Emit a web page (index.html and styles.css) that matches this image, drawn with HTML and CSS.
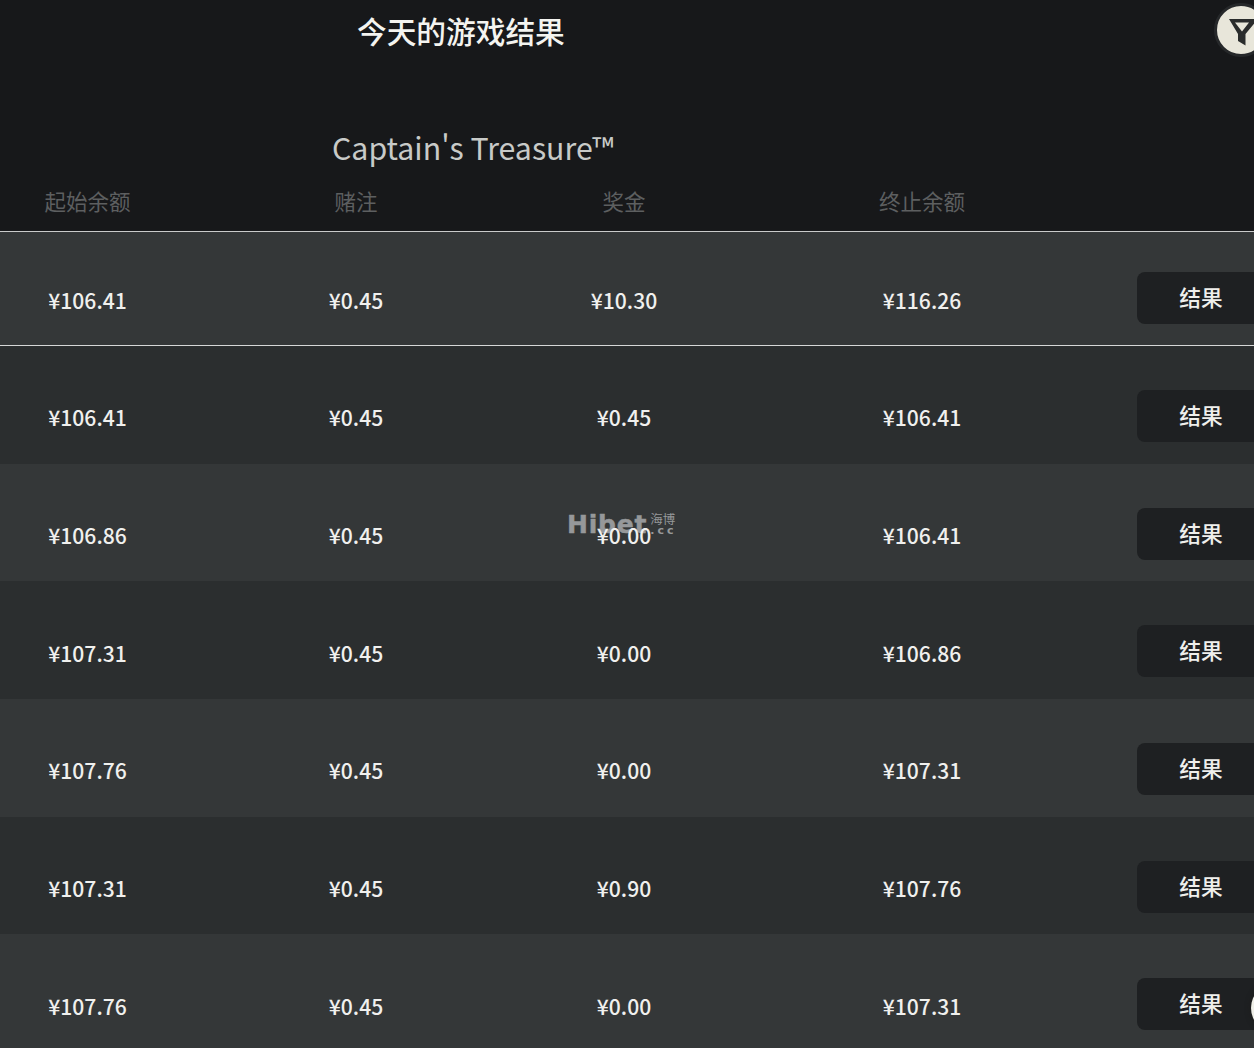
FILE: index.html
```html
<!DOCTYPE html>
<html lang="zh-CN">
<head>
<meta charset="utf-8">
<title>今天的游戏结果</title>
<link rel="stylesheet" href="styles.css">
</head>
<body>
<div class="page">
  <header class="head">
    <h1 class="title">今天的游戏结果</h1>
    <button class="filter" aria-label="filter">
      <svg viewBox="0 0 32 32" width="32" height="32"><path d="M2 3H31L18.5 18V29.5L11 25V18Z M8 6.5L15 15.5L22 6.5Z" fill="#2a2c2c" fill-rule="evenodd"/></svg>
    </button>
  </header>
  <h2 class="game">Captain's Treasure™</h2>
  <div class="row labels">
    <span>起始余额</span><span>赌注</span><span>奖金</span><span>终止余额</span><span></span>
  </div>
  <div class="row data first"><span>¥106.41</span><span>¥0.45</span><span>¥10.30</span><span>¥116.26</span><a class="btn">结果</a></div>
  <div class="row data even"><span>¥106.41</span><span>¥0.45</span><span>¥0.45</span><span>¥106.41</span><a class="btn">结果</a></div>
  <div class="row data"><span>¥106.86</span><span>¥0.45</span><span>¥0.00</span><span>¥106.41</span><a class="btn">结果</a></div>
  <div class="row data even"><span>¥107.31</span><span>¥0.45</span><span>¥0.00</span><span>¥106.86</span><a class="btn">结果</a></div>
  <div class="row data"><span>¥107.76</span><span>¥0.45</span><span>¥0.00</span><span>¥107.31</span><a class="btn">结果</a></div>
  <div class="row data even"><span>¥107.31</span><span>¥0.45</span><span>¥0.90</span><span>¥107.76</span><a class="btn">结果</a></div>
  <div class="row data"><span>¥107.76</span><span>¥0.45</span><span>¥0.00</span><span>¥107.31</span><a class="btn">结果</a></div>
  <div class="mark"><span class="mark-name">Hibet</span><span class="mark-side"><span class="mark-cn">海博</span><span class="mark-cc">.cc</span></span></div>
  <div class="float"></div>
</div>
</body>
</html>
```

FILE: styles.css
```css
* { box-sizing: border-box; }
html, body { margin: 0; height: 100%; overflow: hidden; background: #17181a; }
body { font-family: "Noto Sans CJK SC", "Noto Sans", sans-serif; color: #eee; }
.page { position: relative; width: 1254px; height: 1048px; overflow: hidden; }
.head { height: 64px; padding: 9px 0 0 357px; }
.title { margin: 0; font-size: 29.7px; line-height: 43px; font-weight: 500; color: #f4f4f0; }
.filter { position: absolute; left: 1214px; top: 3px; width: 54px; height: 54px; padding: 4px 0 0 4px; border: 3px solid #26282a; border-radius: 50%; background: #e8e6da; display: flex; align-items: center; justify-content: center; }
.game { margin: 0; padding: 61px 0 0 332px; height: 120px; font-size: 30.3px; line-height: 44px; font-weight: 400; color: #c8cac8; }
.row { display: grid; grid-template-columns: 175px 362px 174px 422px 121px; align-items: center; justify-items: center; }
.labels { height: 49px; padding-bottom: 12px; font-size: 21.5px; color: #5d5f60; margin-top: -2px; }
.data { height: 117.7px; font-size: 21.1px; font-weight: 500; color: #f0f0ee; background: #343738; padding-top: 25px; }
.data > span { position: relative; z-index: 1; }
.data.even { background: #2b2e2f; }
.data.first { height: 115px; border-top: 1px solid #c9caca; border-bottom: 1px solid #d6d7d7; padding-top: 22px; }
.btn { justify-self: start; margin-left: 4px; margin-top: -3px; width: 140px; height: 52px; padding: 0 12px 3px 0; border-radius: 8px; background: #1e2022; display: flex; align-items: center; justify-content: center; font-size: 21.7px; font-weight: 500; color: #efefec; }
.mark { position: absolute; left: 567px; top: 510px; display: flex; gap: 3px; color: #96989a; }
.mark-name { font-family: "DejaVu Sans", sans-serif; font-size: 25px; line-height: 29px; font-weight: 700; letter-spacing: 0.8px; -webkit-text-stroke: 0.5px #96989a; }
.mark-side { display: flex; flex-direction: column; padding-top: 1px; }
.mark-cn { font-size: 12.5px; line-height: 16px; }
.mark-cc { font-family: "DejaVu Sans", sans-serif; font-size: 11px; line-height: 8px; font-weight: 700; letter-spacing: 3px; }
.float { position: absolute; left: 1251px; top: 984px; width: 48px; height: 48px; border-radius: 50%; background: #efefe8; box-shadow: 0 0 4px 2px rgba(30,30,30,.7); }
```
